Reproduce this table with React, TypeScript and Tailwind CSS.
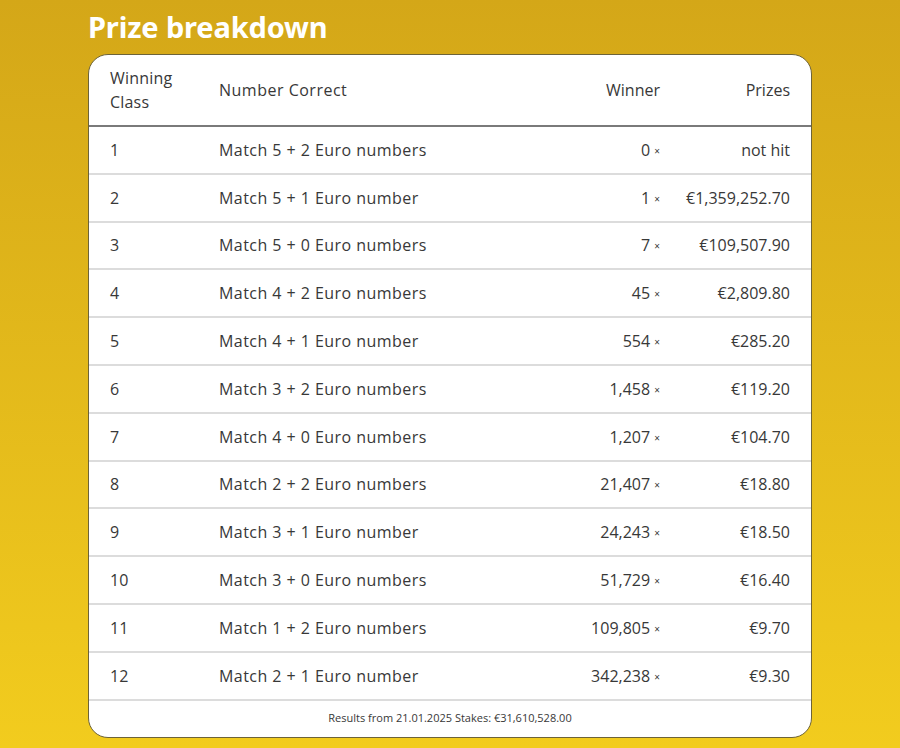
import React from "react";

const rows = [
  ["1", "Match 5 + 2 Euro numbers", "0", "not hit"],
  ["2", "Match 5 + 1 Euro number", "1", "€1,359,252.70"],
  ["3", "Match 5 + 0 Euro numbers", "7", "€109,507.90"],
  ["4", "Match 4 + 2 Euro numbers", "45", "€2,809.80"],
  ["5", "Match 4 + 1 Euro number", "554", "€285.20"],
  ["6", "Match 3 + 2 Euro numbers", "1,458", "€119.20"],
  ["7", "Match 4 + 0 Euro numbers", "1,207", "€104.70"],
  ["8", "Match 2 + 2 Euro numbers", "21,407", "€18.80"],
  ["9", "Match 3 + 1 Euro number", "24,243", "€18.50"],
  ["10", "Match 3 + 0 Euro numbers", "51,729", "€16.40"],
  ["11", "Match 1 + 2 Euro numbers", "109,805", "€9.70"],
  ["12", "Match 2 + 1 Euro number", "342,238", "€9.30"],
];

export default function App() {
  return (
    <div
      className="min-h-[748px] w-[900px] bg-gradient-to-b from-[#d4a718] to-[#f2cc1e] px-[88px] pt-[8px]"
      style={{ fontFamily: "'Open Sans', sans-serif" }}
    >
      <h1 className="text-[29px] font-bold leading-[38px] tracking-[-0.15px] text-white" style={{ fontFamily: "'Noto Sans', sans-serif" }}>
        Prize breakdown
      </h1>
      <div className="mt-[8px] w-[724px] overflow-hidden rounded-[20px] border border-[#6d6338] bg-white text-[#383838]">
        <div className="flex h-[72px] items-center border-b-2 border-[#7a7a7a] px-[21px] text-[16px] leading-[24px]">
          <div className="w-[109px] tracking-[0.2px]">
            Winning
            <br />
            Class
          </div>
          <div className="flex-1 tracking-[0.5px]">Number Correct</div>
          <div className="w-[120px] text-right">Winner</div>
          <div className="w-[130px] text-right">Prizes</div>
        </div>
        {rows.map(([cls, desc, win, prize]) => (
          <div
            key={cls}
            className="flex h-[47.8px] items-center border-b-2 border-[#dcdcdc] px-[21px] text-[16px]"
          >
            <div className="w-[109px]">{cls}</div>
            <div className="flex-1 tracking-[0.45px]">{desc}</div>
            <div className="w-[120px] text-right">
              {win} <span className="align-middle text-[10px]">×</span>
            </div>
            <div className="w-[130px] text-right">{prize}</div>
          </div>
        ))}
        <div className="flex h-[36px] items-center justify-center text-[11px]">
          Results from 21.01.2025 Stakes: €31,610,528.00
        </div>
      </div>
    </div>
  );
}
